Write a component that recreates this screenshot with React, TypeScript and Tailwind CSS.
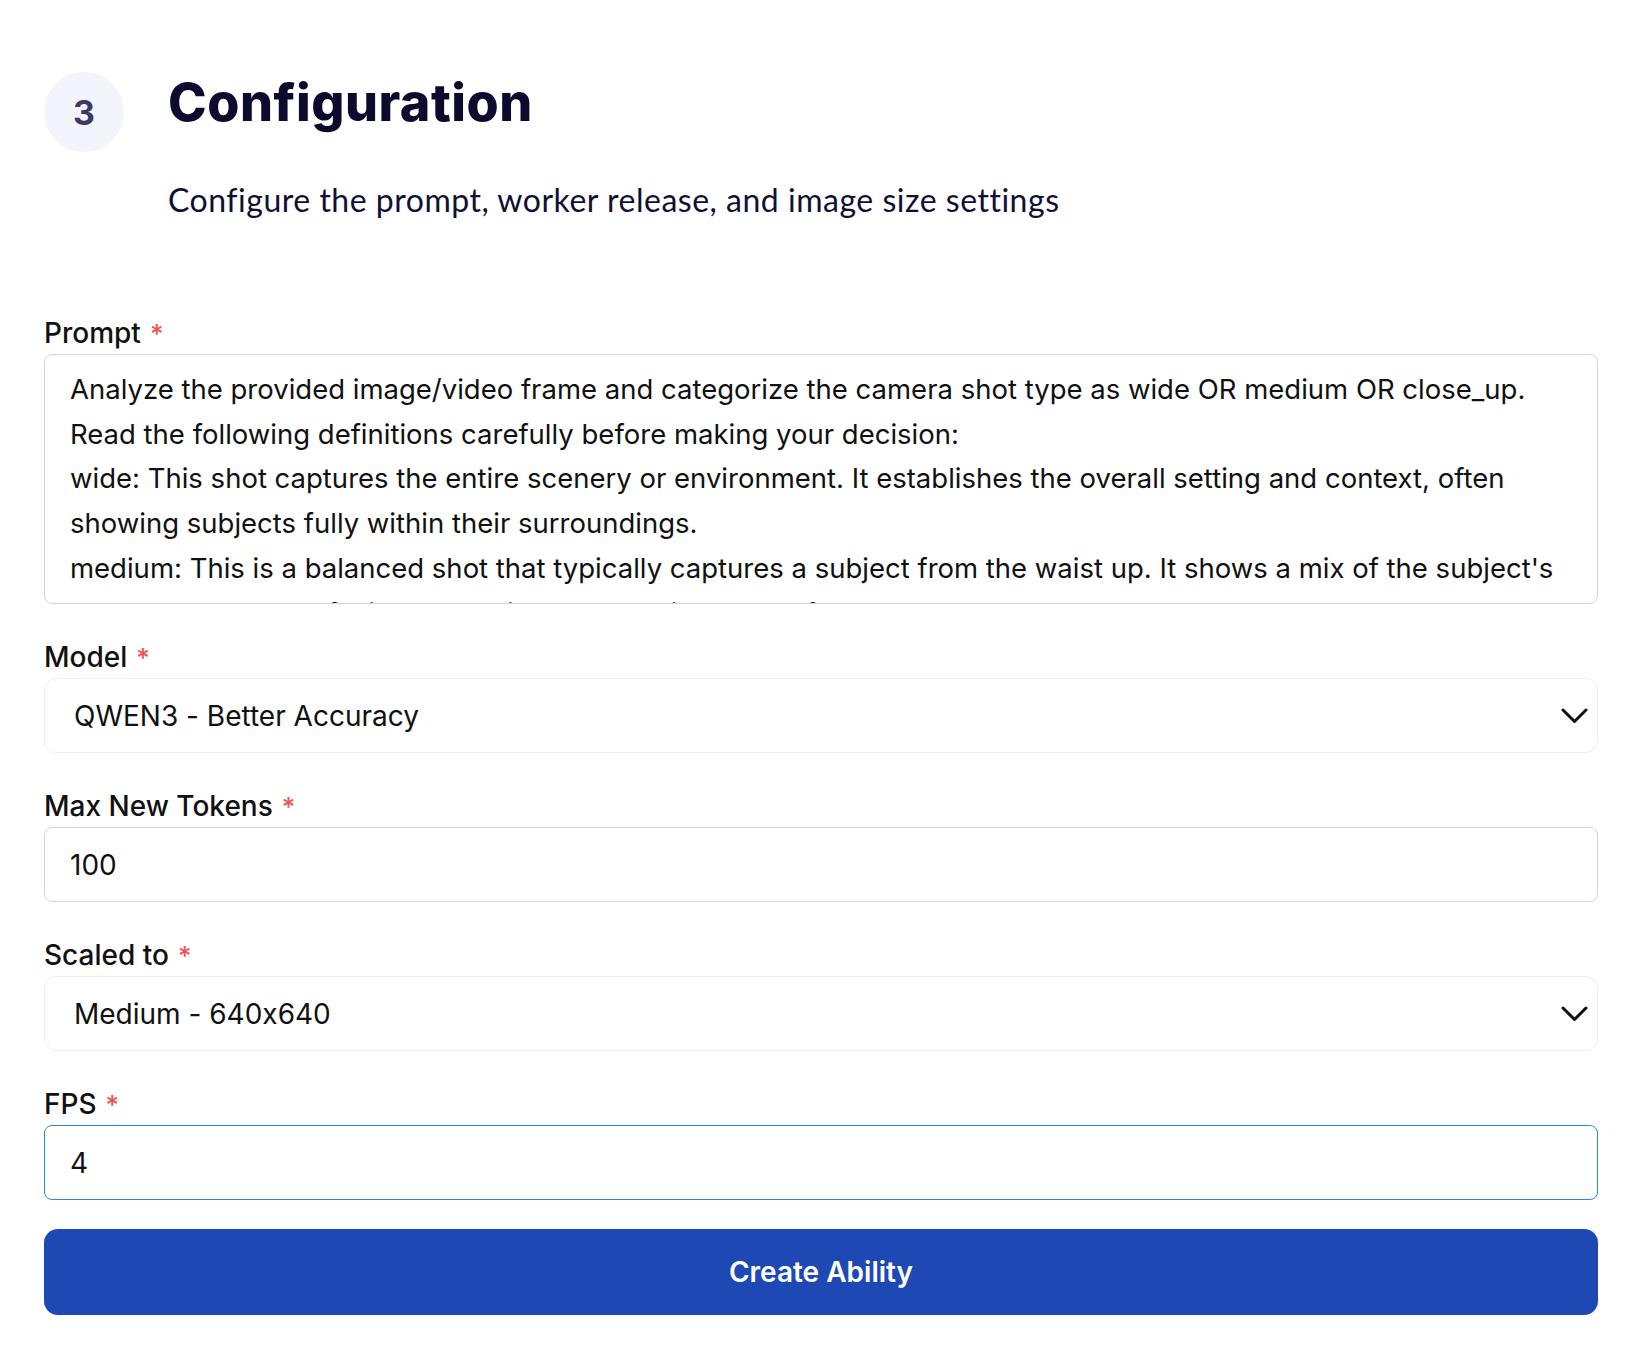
import React from "react"

const promptText =
  "Analyze the provided image/video frame and categorize the camera shot type as wide OR medium OR close_up.\n" +
  "Read the following definitions carefully before making your decision:\n" +
  "wide: This shot captures the entire scenery or environment. It establishes the overall setting and context, often showing subjects fully within their surroundings.\n" +
  "medium: This is a balanced shot that typically captures a subject from the waist up. It shows a mix of the subject's body language and facial expressions along with some of the background.\n" +
  "close_up: This shot focuses tightly on a subject's face or a specific detail, filling most of the frame."

export default function App() {
  return (
    <div className="min-h-screen bg-white pl-[44px] pr-[40px] pt-[72px] pb-10 font-['Inter',sans-serif] text-[#111111] [font-feature-settings:'calt'_0]">
      <div className="flex items-start gap-[44px]">
        <div className="flex h-20 w-20 shrink-0 items-center justify-center rounded-full bg-[#f4f4fd] text-[34px] font-bold text-[#3c3a64]">
          3
        </div>
        <div className="pt-[5px]">
          <h2 className="text-[52px] font-extrabold leading-[52px] tracking-[0.01em] text-[#0c0b2d]">Configuration</h2>
          <p className="mt-[48px] font-['Lato',sans-serif] text-[32px] leading-[45px] tracking-[0.016em] text-[#111034]">
            Configure the prompt, worker release, and image size settings
          </p>
        </div>
      </div>

      <form className="mt-[91px]" onSubmit={(e) => e.preventDefault()}>
        <Field label="Prompt">
          <textarea
            defaultValue={promptText}
            className="block h-[250px] w-full resize-none overflow-hidden rounded-lg border border-[#d1d5db] bg-white px-[25px] pt-[12px] text-[27.5px] leading-[44.7px] text-[#111111] outline-none"
          />
        </Field>

        <Field label="Model" className="mt-[33px]">
          <SelectBox value="QWEN3 - Better Accuracy" />
        </Field>

        <Field label="Max New Tokens" className="mt-[33px]">
          <input
            defaultValue="100"
            className="block h-[75px] w-full rounded-lg border border-[#d1d5db] bg-white px-[25px] text-[28px] text-[#111111] outline-none"
          />
        </Field>

        <Field label="Scaled to" className="mt-[33px]">
          <SelectBox value="Medium - 640x640" />
        </Field>

        <Field label="FPS" className="mt-[33px]">
          <input
            defaultValue="4"
            className="block h-[75px] w-full rounded-lg border border-[#2b87da] bg-white px-[25px] text-[28px] text-[#111111] outline-none"
          />
        </Field>

        <button
          type="submit"
          className="mt-[29px] flex h-[86px] w-full items-center justify-center rounded-[14px] bg-[#1e49b4] text-[28px] font-semibold text-white"
        >
          Create Ability
        </button>
      </form>
    </div>
  )
}

function Field({ label, className = "", children }: { label: string; className?: string; children: React.ReactNode }) {
  return (
    <div className={className}>
      <label className="block h-[40px] text-[28px] font-medium leading-[40px] text-[#111111]">
        {label}
        <span className="ml-[9px] text-[26px] text-[#f05252]">*</span>
      </label>
      <div className="mt-px">{children}</div>
    </div>
  )
}

function SelectBox({ value }: { value: string }) {
  return (
    <button
      type="button"
      className="flex h-[75px] w-full items-center justify-between rounded-[12px] border border-[#eceef3] bg-white pl-[29px] pr-[9px] text-left text-[28px] text-[#111111]"
    >
      <span>{value}</span>
      <svg width="27" height="16" viewBox="0 0 27 16" fill="none" stroke="#111111" strokeWidth="3" strokeLinecap="round" strokeLinejoin="round">
        <polyline points="2,2 13.5,13.5 25,2" />
      </svg>
    </button>
  )
}
